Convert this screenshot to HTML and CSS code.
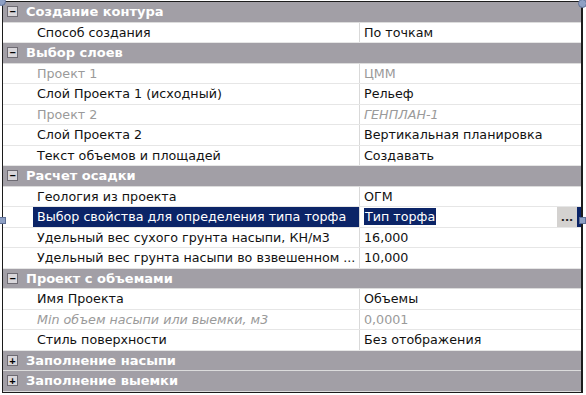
FILE: index.html
```html
<!DOCTYPE html>
<html lang="ru">
<head>
<meta charset="utf-8">
<link rel="stylesheet" href="styles.css">
</head>
<body>
<div class="grid">
  <div class="cat"><span class="tog">−</span>Создание контура</div>
  <div class="row"><div class="name"><span class="lbl">Способ создания</span></div><div class="val">По точкам</div></div>
  <div class="cat"><span class="tog">−</span>Выбор слоев</div>
  <div class="row ro"><div class="name"><span class="lbl">Проект 1</span></div><div class="val">ЦММ</div></div>
  <div class="row"><div class="name"><span class="lbl">Слой Проекта 1 (исходный)</span></div><div class="val">Рельеф</div></div>
  <div class="row ro"><div class="name"><span class="lbl">Проект 2</span></div><div class="val it">ГЕНПЛАН-1</div></div>
  <div class="row"><div class="name"><span class="lbl">Слой Проекта 2</span></div><div class="val">Вертикальная планировка</div></div>
  <div class="row"><div class="name"><span class="lbl">Текст объемов и площадей</span></div><div class="val">Создавать</div></div>
  <div class="cat"><span class="tog">−</span>Расчет осадки</div>
  <div class="row"><div class="name"><span class="lbl">Геология из проекта</span></div><div class="val">ОГМ</div></div>
  <div class="row sel"><div class="name"><span class="lbl">Выбор свойства для определения типа торфа</span></div><div class="val"><span class="hl">Тип торфа</span><span class="btn">...</span></div></div>
  <div class="row"><div class="name"><span class="lbl">Удельный вес сухого грунта насыпи, КН/м3</span></div><div class="val">16,000</div></div>
  <div class="row"><div class="name"><span class="lbl">Удельный вес грунта насыпи во взвешенном ...</span></div><div class="val">10,000</div></div>
  <div class="cat"><span class="tog">−</span>Проект с объемами</div>
  <div class="row"><div class="name"><span class="lbl">Имя Проекта</span></div><div class="val">Объемы</div></div>
  <div class="row ro"><div class="name"><span class="lbl it">Min объем насыпи или выемки, м3</span></div><div class="val">0,0001</div></div>
  <div class="row"><div class="name"><span class="lbl">Стиль поверхности</span></div><div class="val">Без отображения</div></div>
  <div class="cat"><span class="tog">+</span>Заполнение насыпи</div>
  <div class="cat"><span class="tog">+</span>Заполнение выемки</div>
  <span class="handle h-tl"></span>
  <span class="handle h-tr"></span>
  <span class="sq s-l"></span>
  <span class="sq s-r"></span>
</div>
</body>
</html>
```
FILE: styles.css
```css
html, body {
  margin: 0;
  padding: 0;
  background: #ffffff;
}
body {
  width: 586px;
  height: 395px;
  overflow: hidden;
  font-family: "DejaVu Sans", Verdana, sans-serif;
  font-size: 12.7px;
  color: #111;
}
.grid {
  position: relative;
  margin: 1px 0 0 2px;
  width: 578px;
  border: 1px solid #1c1c1c;
  border-right-width: 2px;
  display: flex;
  flex-direction: column;
}
.cat, .row {
  height: 19.5px;
  border-bottom: 1px solid #e6e6e6;
  display: flex;
  align-items: center;
  box-sizing: content-box;
}
.cat {
  background: #a29fa6;
  color: #ffffff;
  font-weight: bold;
  font-size: 13px;
  border-bottom-color: #dcdcdc;
}
.tog {
  width: 9px;
  height: 9px;
  margin: 0 8px 0 4px;
  background: #d8d6da;
  border: 1px solid #6e6b73;
  color: #000;
  font-size: 10px;
  line-height: 9px;
  text-align: center;
  font-weight: bold;
  font-family: "DejaVu Sans Mono", monospace;
}
.name {
  width: 326px;
  padding-left: 30px;
  height: 100%;
  display: flex;
  border-right: 1px solid #d9d9d9;
  white-space: nowrap;
  overflow: hidden;
}
.lbl {
  flex: 1;
  display: flex;
  align-items: center;
  padding-left: 4px;
}
.val {
  flex: 1;
  height: 100%;
  display: flex;
  align-items: center;
  padding-left: 4px;
  white-space: nowrap;
}
.ro .name, .ro .val {
  color: #9a9a9a;
}
.it {
  font-style: italic;
}
.sel .lbl {
  background: #0b2467;
  color: #ffffff;
}
.hl {
  background: #0b2467;
  color: #ffffff;
  padding: 1px 1px;
}
.btn {
  margin-left: auto;
  width: 24px;
  height: 100%;
  background: #d4d2d0;
  color: #222;
  font-weight: bold;
  font-size: 11px;
  display: flex;
  align-items: flex-end;
  justify-content: center;
  padding-bottom: 3px;
  box-sizing: border-box;
  border-right: 4px solid #0b2467;
}
.handle {
  position: absolute;
  width: 7px;
  height: 7px;
  border-radius: 50%;
  background: #8ea0c4;
  border: 1px solid #5f7096;
}
.h-tl { left: -6px; top: -5px; }
.h-tr { right: -6px; top: -3px; }
.sq {
  position: absolute;
  width: 5px;
  height: 5px;
  background: #8ea0c4;
  border: 1px solid #5f7096;
  top: 215px;
}
.s-l { left: -4px; }
.s-r { right: -5px; }
```
